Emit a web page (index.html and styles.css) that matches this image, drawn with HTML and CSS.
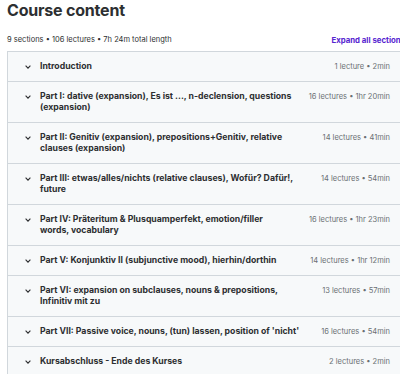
FILE: index.html
```html
<!DOCTYPE html>
<html lang="en">
<head>
<meta charset="utf-8">
<title>Course content</title>
<link rel="stylesheet" href="styles.css">
</head>
<body>
<div class="page">
  <h2 class="title">Course content</h2>
  <div class="summary">
    <span class="stats">9 sections • 106 lectures • 7h 24m total length</span>
    <span class="expand">Expand all sections</span>
  </div>
  <div class="sections">
    <div class="row">
      <svg class="chev" viewBox="0 0 6 4" width="6" height="4"><path d="M0.6 0.6 L3 3.2 L5.4 0.6" fill="none" stroke="#2d2f31" stroke-width="1.1"/></svg>
      <span class="name">Introduction</span>
      <span class="meta">1 lecture • 2min</span>
    </div>
    <div class="row">
      <svg class="chev" viewBox="0 0 6 4" width="6" height="4"><path d="M0.6 0.6 L3 3.2 L5.4 0.6" fill="none" stroke="#2d2f31" stroke-width="1.1"/></svg>
      <span class="name">Part I: dative (expansion), Es ist ..., n-declension, questions (expansion)</span>
      <span class="meta">16 lectures • 1hr 20min</span>
    </div>
    <div class="row">
      <svg class="chev" viewBox="0 0 6 4" width="6" height="4"><path d="M0.6 0.6 L3 3.2 L5.4 0.6" fill="none" stroke="#2d2f31" stroke-width="1.1"/></svg>
      <span class="name">Part II: Genitiv (expansion), prepositions+Genitiv, relative clauses (expansion)</span>
      <span class="meta">14 lectures • 41min</span>
    </div>
    <div class="row">
      <svg class="chev" viewBox="0 0 6 4" width="6" height="4"><path d="M0.6 0.6 L3 3.2 L5.4 0.6" fill="none" stroke="#2d2f31" stroke-width="1.1"/></svg>
      <span class="name">Part III: etwas/alles/nichts (relative clauses), Wofür? Dafür!, future</span>
      <span class="meta">14 lectures • 54min</span>
    </div>
    <div class="row">
      <svg class="chev" viewBox="0 0 6 4" width="6" height="4"><path d="M0.6 0.6 L3 3.2 L5.4 0.6" fill="none" stroke="#2d2f31" stroke-width="1.1"/></svg>
      <span class="name">Part IV: Präteritum &amp; Plusquamperfekt, emotion/filler words, vocabulary</span>
      <span class="meta">16 lectures • 1hr 23min</span>
    </div>
    <div class="row">
      <svg class="chev" viewBox="0 0 6 4" width="6" height="4"><path d="M0.6 0.6 L3 3.2 L5.4 0.6" fill="none" stroke="#2d2f31" stroke-width="1.1"/></svg>
      <span class="name">Part V: Konjunktiv II (subjunctive mood), hierhin/dorthin</span>
      <span class="meta">14 lectures • 1hr 12min</span>
    </div>
    <div class="row">
      <svg class="chev" viewBox="0 0 6 4" width="6" height="4"><path d="M0.6 0.6 L3 3.2 L5.4 0.6" fill="none" stroke="#2d2f31" stroke-width="1.1"/></svg>
      <span class="name">Part VI: expansion on subclauses, nouns &amp; prepositions, Infinitiv mit zu</span>
      <span class="meta">13 lectures • 57min</span>
    </div>
    <div class="row">
      <svg class="chev" viewBox="0 0 6 4" width="6" height="4"><path d="M0.6 0.6 L3 3.2 L5.4 0.6" fill="none" stroke="#2d2f31" stroke-width="1.1"/></svg>
      <span class="name">Part VII: Passive voice, nouns, (tun) lassen, position of 'nicht'</span>
      <span class="meta">16 lectures • 54min</span>
    </div>
    <div class="row">
      <svg class="chev" viewBox="0 0 6 4" width="6" height="4"><path d="M0.6 0.6 L3 3.2 L5.4 0.6" fill="none" stroke="#2d2f31" stroke-width="1.1"/></svg>
      <span class="name">Kursabschluss - Ende des Kurses</span>
      <span class="meta">2 lectures • 2min</span>
    </div>
  </div>
</div>
</body>
</html>
```

FILE: styles.css
```css
html, body {
  margin: 0;
  padding: 0;
  overflow: hidden;
  background: #ffffff;
}
body {
  font-family: Inter, "Noto Sans", "Liberation Sans", sans-serif;
  color: #2d2f31;
}
.page {
  width: 398px;
  padding-left: 7px;
}
.title {
  margin: 0;
  font-size: 16px;
  line-height: 20px;
  font-weight: 700;
  letter-spacing: -0.2px;
}
.summary {
  display: flex;
  justify-content: space-between;
  align-items: center;
  margin-top: 14px;
  height: 12px;
  font-size: 7.5px;
  line-height: 12px;
}
.stats {
  color: #2d2f31;
}
.expand {
  color: #5624d0;
  font-weight: 700;
  white-space: nowrap;
  font-size: 7.8px;
}
.sections {
  margin-top: 5px;
  border: 1px solid #d1d7dc;
  border-top: none;
}
.row {
  display: flex;
  align-items: flex-start;
  background: #f7f9fa;
  border-top: 1px solid #d1d7dc;
  padding: 9px 14px 9px 17px;
  font-size: 8.7px;
  line-height: 11px;
}
.chev {
  flex: none;
  margin-top: 4px;
  margin-right: 9px;
}
.name {
  flex: 1;
  font-weight: 700;
  color: #2d2f31;
}
.meta {
  flex: none;
  margin-left: 16px;
  font-size: 7.5px;
  color: #6a6f73;
  white-space: nowrap;
}
```
